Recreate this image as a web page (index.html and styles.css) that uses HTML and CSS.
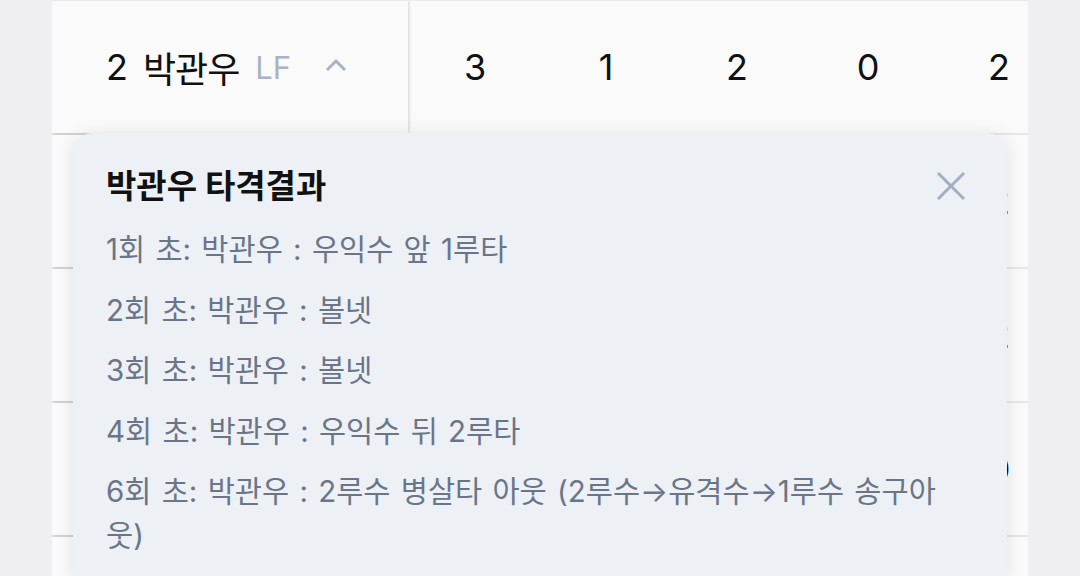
FILE: index.html
```html
<!DOCTYPE html>
<html lang="ko">
<head>
	<meta charset="UTF-8">
	<meta name="viewport" content="width=device-width, initial-scale=1.0">
	<title>박관우 타격결과</title>
	<link rel="stylesheet" href="styles.css">
</head>
<body>
	<div class="board">
		<div class="row">
			<div class="cell-player">
				<span class="player-no">2</span>
				<span class="player-name">박관우</span>
				<span class="player-pos">LF</span>
				<a href="#" class="btn-toggle">
					<svg width="22" height="14" viewBox="0 0 22 14"><path d="M2 12 L11 3 L20 12" fill="none" stroke="#a8b3c4" stroke-width="3"/></svg>
				</a>
			</div>
			<div class="cell">3</div>
			<div class="cell">1</div>
			<div class="cell">2</div>
			<div class="cell">0</div>
			<div class="cell">2</div>
		</div>
		<div class="row">
			<div class="cell-player"></div>
			<div class="cell"></div>
			<div class="cell"></div>
			<div class="cell"></div>
			<div class="cell"></div>
			<div class="cell">2</div>
		</div>
		<div class="row">
			<div class="cell-player"></div>
			<div class="cell"></div>
			<div class="cell"></div>
			<div class="cell"></div>
			<div class="cell"></div>
			<div class="cell">2</div>
		</div>
		<div class="row">
			<div class="cell-player"></div>
			<div class="cell"></div>
			<div class="cell"></div>
			<div class="cell"></div>
			<div class="cell"></div>
			<div class="cell">0</div>
		</div>
		<div class="row">
			<div class="cell-player"></div>
			<div class="cell"></div>
			<div class="cell"></div>
			<div class="cell"></div>
			<div class="cell"></div>
			<div class="cell"></div>
		</div>

		<div class="popover">
			<div class="popover-head">
				<h2 class="popover-title">박관우 타격결과</h2>
				<a href="#" class="btn-close">
					<svg width="30" height="30" viewBox="0 0 30 30"><path d="M2 2 L28 28 M28 2 L2 28" fill="none" stroke="#a3aec0" stroke-width="3"/></svg>
				</a>
			</div>
			<ul class="list-result">
				<li class="item-result">1회 초: 박관우 : 우익수 앞 1루타</li>
				<li class="item-result">2회 초: 박관우 : 볼넷</li>
				<li class="item-result">3회 초: 박관우 : 볼넷</li>
				<li class="item-result">4회 초: 박관우 : 우익수 뒤 2루타</li>
				<li class="item-result">6회 초: 박관우 : 2루수 병살타 아웃 (2루수→유격수→1루수 송구아웃)</li>
			</ul>
		</div>
	</div>
</body>
</html>
```

FILE: styles.css
```css
body{
	margin: 0; background-color: #efeff1;
	font-family: Inter, "Noto Sans CJK KR", sans-serif; color: #111;
}
.board{
	position: relative; margin-left: 52px; width: 976px; height: 576px;
	overflow: hidden; background-color: #fafafa; border-top: 1px solid #e9e9eb;
}
.row{ display: flex; height: 132px; border-bottom: 2px solid #e6e6e8;}
.cell-player{
	flex: 0 0 356px; box-sizing: border-box; padding-left: 54px;
	display: flex; align-items: center;
	background-color: #fafafa; box-shadow: 1px 0 3px rgba(0,0,0,0.16);
	position: relative; z-index: 1; font-size: 36px;
}
.player-name{ margin-left: 15px; letter-spacing: -1px;}
.player-pos{ margin-left: 16px; color: #a8b3c4; font-size: 31px;}
.btn-toggle{ display: flex; margin-left: 34px; margin-top: -4px;}
.cell{
	flex: 0 0 131px; box-sizing: border-box; padding-left: 3px;
	display: flex; align-items: center; justify-content: center;
	font-size: 36px;
}

.popover{
	position: absolute; left: 21px; top: 132px; z-index: 2;
	width: 934px; box-sizing: border-box; padding: 33px 41px 30px 33px;
	background-color: #edf1f6; border-radius: 20px;
	box-shadow: 0 2px 18px rgba(0,0,0,0.1);
}
.popover-head{ display: flex; justify-content: space-between; align-items: center;}
.popover-title{ margin: 0; font-size: 33px; line-height: 40px; font-weight: 700;}
.btn-close{ display: flex;}
.list-result{
	list-style: none; margin: 21px 0 0; padding: 0 16px 0 0;
	display: flex; flex-direction: column; gap: 16.5px;
	font-size: 29.5px; line-height: 44px; word-spacing: 2px; color: #6b7588;
}
```
